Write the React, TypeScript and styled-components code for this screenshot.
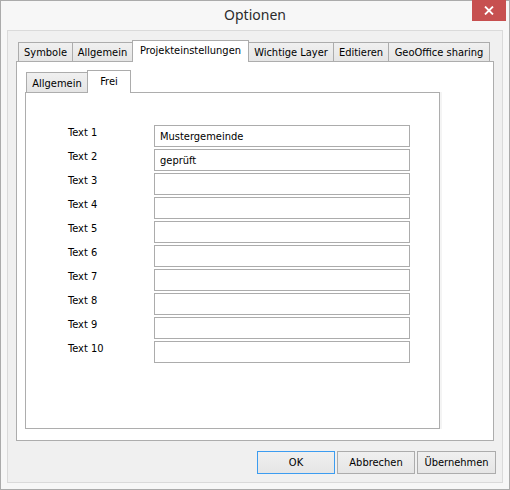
import { Fragment } from "react";
import styled, { createGlobalStyle } from "styled-components";

const GlobalStyle = createGlobalStyle`
  body {
    margin: 0;
    background: #ffffff;
  }
`;

const Window = styled.div`
  width: 510px;
  height: 490px;
  box-sizing: border-box;
  border: 1px solid #ababab;
  background: #f7f7f7;
  display: flex;
  flex-direction: column;
  font-family: "DejaVu Sans", Tahoma, sans-serif;
  font-stretch: condensed;
  font-size: 11px;
  color: #000;
`;

const TitleBar = styled.div`
  position: relative;
  height: 29px;
  display: flex;
  align-items: center;
  justify-content: center;
`;

const Title = styled.span`
  font-family: "Noto Sans", "Open Sans", sans-serif;
  font-stretch: normal;
  font-size: 14px;
  color: #2b2b2b;
  margin-top: -2px;
`;

const CloseButton = styled.div`
  position: absolute;
  top: -1px;
  right: 3px;
  width: 34px;
  height: 21px;
  background: #c75050;
  display: flex;
  align-items: center;
  justify-content: center;
`;

const Client = styled.div`
  flex: 1;
  margin: 0 6px 6px;
  border: 1px solid #dadada;
  background: #f0f0f0;
  padding: 9px 8px 8px;
  display: flex;
  flex-direction: column;
`;

const TabStrip = styled.div<{ $inset: number; $height: number }>`
  display: flex;
  align-items: flex-end;
  height: ${(p) => p.$height}px;
  padding-left: ${(p) => p.$inset}px;
  position: relative;
  z-index: 1;
`;

const Tab = styled.div<{ $width: number; $active?: boolean; $h: number; $pad: number }>`
  box-sizing: border-box;
  width: ${(p) => p.$width}px;
  height: ${(p) => (p.$active ? p.$h + 1 : p.$h - 2)}px;
  margin-bottom: ${(p) => (p.$active ? -1 : 0)}px;
  margin-left: -1px;
  border: 1px solid #acacac;
  border-bottom: none;
  background: ${(p) =>
    p.$active ? "#ffffff" : "linear-gradient(#f0f0f0, #e5e5e5)"};
  position: relative;
  z-index: ${(p) => (p.$active ? 2 : 1)};
  display: flex;
  justify-content: center;
  padding-top: ${(p) => p.$pad}px;
  white-space: nowrap;
  &:first-child {
    margin-left: 0;
  }
`;

const Panel = styled.div`
  flex: 1;
  border: 1px solid #adadad;
  background: #ffffff;
  padding: 8px;
  display: flex;
  flex-direction: column;
`;

const InnerPanel = styled.div`
  width: 415px;
  height: 337px;
  box-sizing: border-box;
  border: 1px solid #adadad;
  background: #ffffff;
  padding: 32px 0 0 42px;
  box-shadow: 2px 0 0 #f4f4f4;
`;

const FieldGrid = styled.div`
  display: grid;
  grid-template-columns: 86px 256px;
  grid-auto-rows: 22px;
  row-gap: 2px;
`;

const Label = styled.label`
  line-height: 13px;
  padding-top: 1px;
`;

const Field = styled.input`
  box-sizing: border-box;
  width: 256px;
  height: 22px;
  margin: 0;
  border: 1px solid #acacac;
  padding: 0 5px;
  font: inherit;
  font-stretch: condensed;
  color: #000;
  background: #fff;
  outline: none;
`;

const ButtonRow = styled.div`
  display: flex;
  justify-content: flex-end;
  gap: 2px;
  margin: 10px -2px 0 0;
`;

const Button = styled.button<{ $width: number; $default?: boolean }>`
  box-sizing: border-box;
  width: ${(p) => p.$width}px;
  height: 23px;
  margin: 0;
  padding: 0;
  font: inherit;
  font-stretch: condensed;
  color: #000;
  border: 1px solid ${(p) => (p.$default ? "#3c9cf0" : "#acacac")};
  background: linear-gradient(#f0f0f0, #e5e5e5);
`;

const mainTabs = [
  { name: "Symbole", width: 55 },
  { name: "Allgemein", width: 61 },
  { name: "Projekteinstellungen", width: 117, active: true },
  { name: "Wichtige Layer", width: 86 },
  { name: "Editieren", width: 56 },
  { name: "GeoOffice sharing", width: 102 },
];

const subTabs = [
  { name: "Allgemein", width: 62 },
  { name: "Frei", width: 44, active: true },
];

const fields = [
  "Mustergemeinde",
  "geprüft",
  "",
  "",
  "",
  "",
  "",
  "",
  "",
  "",
];

export default function App() {
  return (
    <>
      <GlobalStyle />
      <Window>
        <TitleBar>
          <Title>Optionen</Title>
          <CloseButton>
            <svg width="10" height="9" viewBox="0 0 10 9">
              <path d="M1 0.5 L9 8.5 M9 0.5 L1 8.5" stroke="#fff" strokeWidth="1.8" />
            </svg>
          </CloseButton>
        </TitleBar>
        <Client>
          <TabStrip $inset={2} $height={21}>
            {mainTabs.map((t) => (
              <Tab key={t.name} $width={t.width} $active={t.active} $h={21} $pad={3}>
                {t.name}
              </Tab>
            ))}
          </TabStrip>
          <Panel>
            <TabStrip $inset={1} $height={22}>
              {subTabs.map((t) => (
                <Tab key={t.name} $width={t.width} $active={t.active} $h={22} $pad={4}>
                  {t.name}
                </Tab>
              ))}
            </TabStrip>
            <InnerPanel>
              <FieldGrid>
                {fields.map((v, i) => (
                  <Fragment key={i}>
                    <Label>Text {i + 1}</Label>
                    <Field defaultValue={v} readOnly />
                  </Fragment>
                ))}
              </FieldGrid>
            </InnerPanel>
          </Panel>
          <ButtonRow>
            <Button $width={78} $default>
              OK
            </Button>
            <Button $width={78}>Abbrechen</Button>
            <Button $width={79}>Übernehmen</Button>
          </ButtonRow>
        </Client>
      </Window>
    </>
  );
}
